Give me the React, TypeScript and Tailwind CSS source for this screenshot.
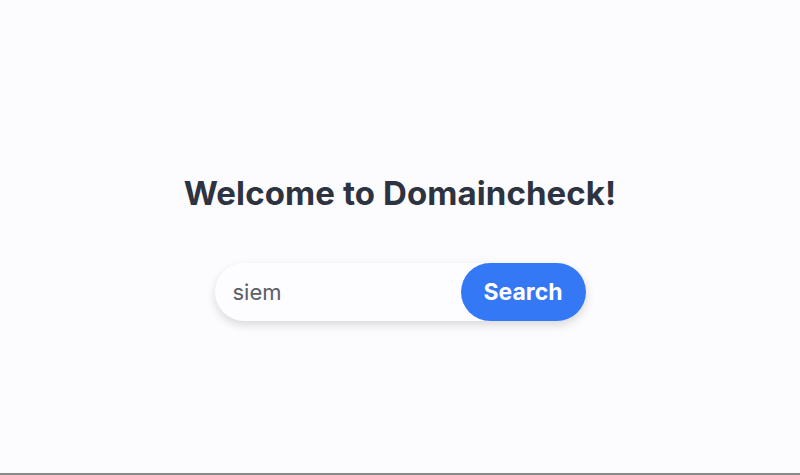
import { useState } from "react";

export default function App() {
  const [query, setQuery] = useState("siem");

  return (
    <div className="flex h-[475px] w-full flex-col items-center bg-[#fcfbfe] border-b-2 border-[#8a8a8a] font-['Inter',sans-serif]">
      <h1 className="mt-[171px] text-[33px] font-bold leading-[44px] tracking-[0.1px] text-[#2d3340]">
        Welcome to Domaincheck!
      </h1>

      <form
        className="mt-[48px] flex h-[58px] w-[371px] items-center rounded-full bg-[#fdfcff] shadow-[0_4px_10px_rgba(0,0,0,0.14)]"
        onSubmit={(e) => e.preventDefault()}
      >
        <input
          value={query}
          onChange={(e) => setQuery(e.target.value)}
          className="h-full min-w-0 flex-1 bg-transparent pl-[18px] text-[22px] text-[#5b5e66] outline-none"
        />
        <button
          type="submit"
          className="h-full w-[125px] rounded-full bg-[#3478f6] text-[23px] font-bold text-white"
        >
          Search
        </button>
      </form>
    </div>
  );
}
